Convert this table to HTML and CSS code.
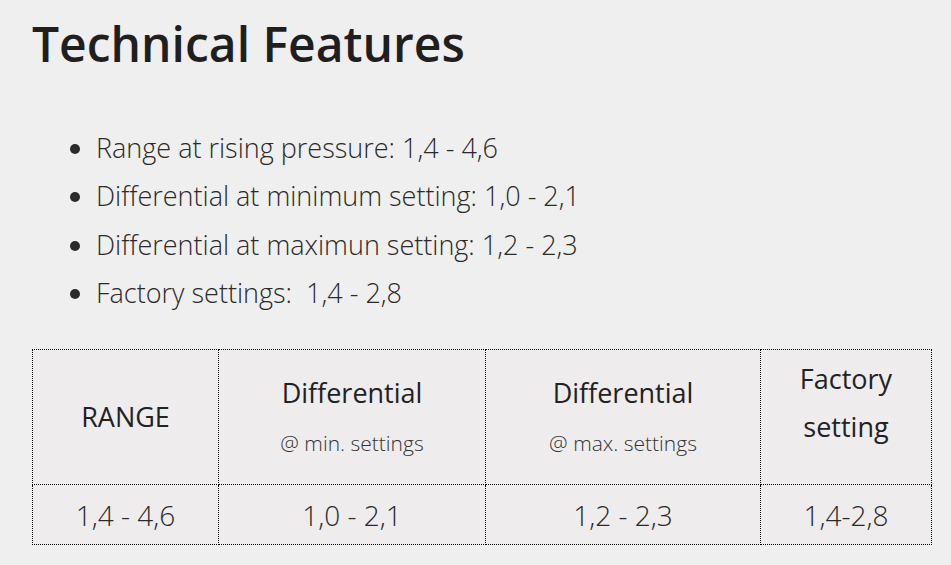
FILE: index.html
```html
<!DOCTYPE html>
<html>
<head>
<meta charset="utf-8">
<link rel="stylesheet" href="styles.css">
</head>
<body>
<div class="page">
  <h1 class="title">Technical Features</h1>
  <ul class="features">
    <li>Range at rising pressure: 1,4 - 4,6</li>
    <li>Differential at minimum setting: 1,0 - 2,1</li>
    <li>Differential at maximun setting: 1,2 - 2,3</li>
    <li>Factory settings:&nbsp; 1,4 - 2,8</li>
  </ul>
  <table class="specs">
    <thead>
      <tr>
        <th class="c1">RANGE</th>
        <th class="c2">Differential<span class="sub">@ min. settings</span></th>
        <th class="c3">Differential<span class="sub">@ max. settings</span></th>
        <th class="c4">Factory setting</th>
      </tr>
    </thead>
    <tbody>
      <tr>
        <td>1,4 - 4,6</td>
        <td>1,0 - 2,1</td>
        <td>1,2 - 2,3</td>
        <td>1,4-2,8</td>
      </tr>
    </tbody>
  </table>
</div>
</body>
</html>
```

FILE: styles.css
```css
html, body {
  margin: 0;
  padding: 0;
  background: #efefef;
}
body {
  font-family: "Open Sans", "Liberation Sans", sans-serif;
  color: #222;
}
.page {
  padding: 14px 20px 0 32px;
}
.title {
  margin: 0;
  font-size: 48px;
  font-weight: 600;
  line-height: 60px;
  color: #1f1f1f;
}
.features {
  margin: 50px 0 0 0;
  padding: 0 0 0 64px;
  font-size: 27px;
  font-weight: 300;
  line-height: 48.3px;
  color: #2a2a2a;
}
.specs {
  margin-top: 32px;
  border-collapse: collapse;
  table-layout: fixed;
  width: 900px;
  text-align: center;
  color: #2a2a2a;
  background: #eeeced;
}
.specs th, .specs td {
  border: 1px dotted #000;
  padding: 0;
}
.specs th {
  height: 134px;
  font-size: 27px;
  font-weight: 400;
  line-height: 48px;
  color: #222;
}
.specs .sub {
  display: block;
  font-size: 21px;
  font-weight: 300;
  line-height: 52px;
  color: #333;
}
.specs th.c2, .specs th.c3 {
  padding-top: 3px;
  height: 131px;
}
.specs th.c4 {
  height: 105px;
  padding: 0 4px 29px;
}
.specs td {
  height: 59px;
  font-size: 28px;
  font-weight: 300;
}
.c1 { width: 185px; }
.c2 { width: 266px; }
.c3 { width: 274px; }
.c4 { width: 162px; }
```
